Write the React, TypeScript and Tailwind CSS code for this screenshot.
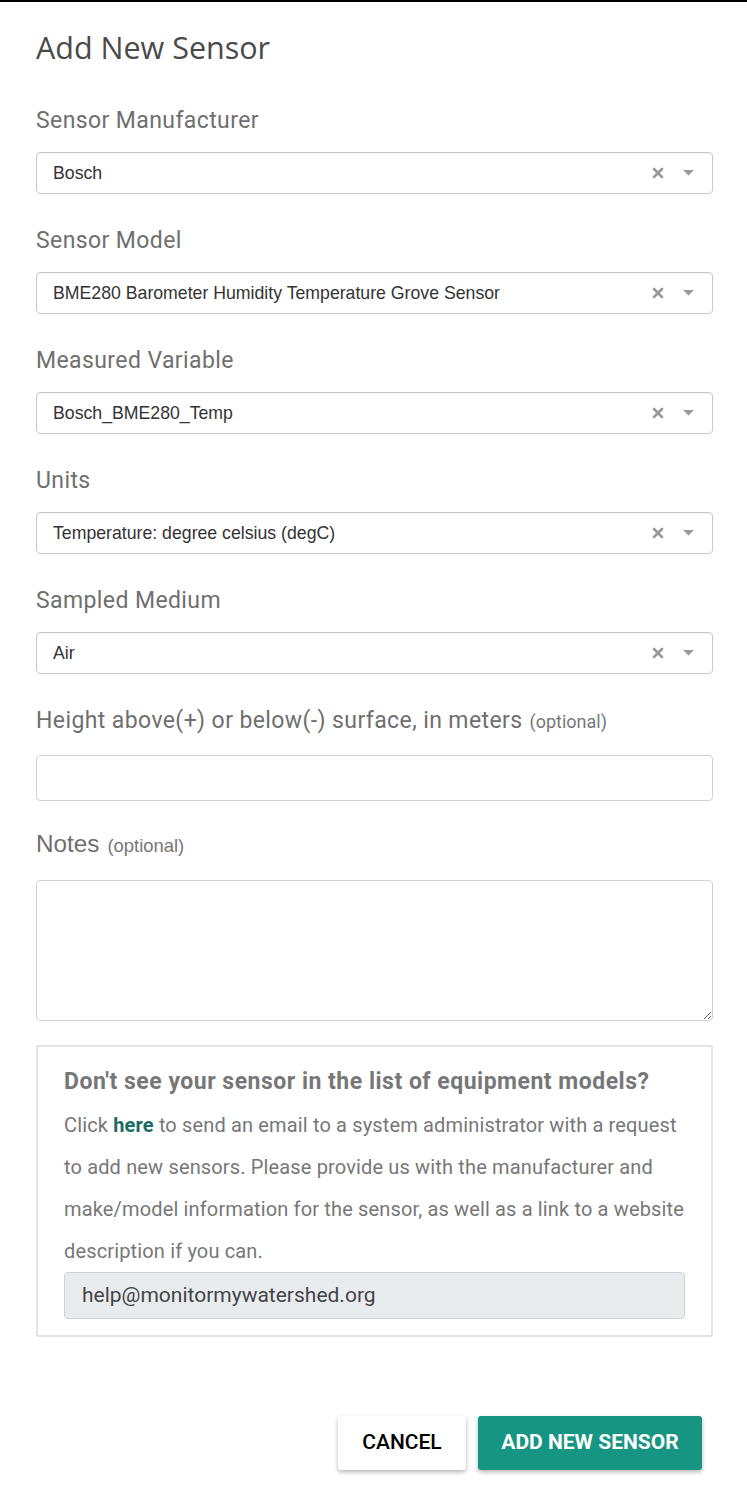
import React from "react";

const labelCls = "text-[23px] leading-none tracking-[0.4px] text-[#6f6f6f]";

function SelectBox({ value }: { value: string }) {
  return (
    <div className="h-[42px] w-full rounded-[4px] border border-[#c8c8c8] bg-white flex items-center pl-4 pr-[18px] shadow-[inset_0_1px_1px_rgba(0,0,0,0.04)]">
      <span className="flex-1 text-[17.7px] text-[#333] truncate" style={{ fontFamily: '"Liberation Sans", Arial, sans-serif' }}>
        {value}
      </span>
      <svg width="12" height="12" viewBox="0 0 12 12" className="mr-[19px]">
        <path d="M2 2 L10 10 M10 2 L2 10" stroke="#999" strokeWidth="2.6" strokeLinecap="round" />
      </svg>
      <svg width="11" height="6" viewBox="0 0 11 6">
        <path d="M0 0 L11 0 L5.5 5.5 Z" fill="#999" />
      </svg>
    </div>
  );
}

function Field({ label, value }: { label: string; value: string }) {
  return (
    <div className="flex flex-col">
      <div className={`${labelCls} h-[30px] flex items-center`}>{label}</div>
      <div className="mt-[17px]">
        <SelectBox value={value} />
      </div>
    </div>
  );
}

const sansLib = { fontFamily: '"Liberation Sans", Arial, sans-serif' };

export default function App() {
  return (
    <div
      className="w-[747px] h-[1503px] bg-white border-t-2 border-black"
      style={{ fontFamily: 'Roboto, "Liberation Sans", sans-serif' }}
    >
      <div className="pl-9 pr-[34px]">
        <h1
          className="pt-[28px] text-[30.5px] leading-[34px] text-[#4a4a4a]"
          style={{ fontFamily: '"Open Sans", "Noto Sans", sans-serif' }}
        >
          Add New Sensor
        </h1>
        <div className="mt-[41px] flex flex-col gap-[31px]">
          <Field label="Sensor Manufacturer" value="Bosch" />
          <Field label="Sensor Model" value="BME280 Barometer Humidity Temperature Grove Sensor" />
          <Field label="Measured Variable" value="Bosch_BME280_Temp" />
          <Field label="Units" value="Temperature: degree celsius (degC)" />
          <Field label="Sampled Medium" value="Air" />
        </div>

        <div className="mt-[31px] h-[30px] flex items-center whitespace-nowrap">
          <span className={labelCls}>Height above(+) or below(-) surface, in meters</span>
          <span className="ml-[7px] text-[18px] text-[#777] mt-[3px]">(optional)</span>
        </div>
        <input className="mt-[20px] block w-full h-[46px] rounded-[4px] border border-[#cfd2d6] bg-white" />

        <div className="mt-[28px] h-[30px] flex items-center">
          <span className="text-[24.3px] text-[#6f6f6f]" style={sansLib}>
            Notes
          </span>
          <span className="ml-[8px] text-[18.4px] text-[#777] mt-[3px]" style={sansLib}>
            (optional)
          </span>
        </div>
        <textarea className="mt-[21px] block w-full h-[141px] rounded-[4px] border border-[#cfd2d6] bg-white resize-y" />

        <div className="mt-[24px] border-2 border-[#e3e3e3] rounded-[2px] px-[26px] pt-[18px] pb-[16px]">
          <div className="text-[23px] tracking-[0.5px] font-bold text-[#777] leading-[34px] whitespace-nowrap">
            Don't see your sensor in the list of equipment models?
          </div>
          <p className="text-[20px] tracking-[0.15px] leading-[42px] text-[#777] mt-[5px] whitespace-nowrap">
            Click <span className="font-bold text-[#1e6b63]">here</span> to send an email to a system administrator with a request
            <br />
            to add new sensors. Please provide us with the manufacturer and
            <br />
            make/model information for the sensor, as well as a link to a website
            <br />
            description if you can.
          </p>
          <div className="h-[47px] rounded-[4px] border border-[#cfd3d8] bg-[#e9ecef] flex items-center px-[17px] text-[21px] text-[#444]">
            help@monitormywatershed.org
          </div>
        </div>

        <div className="mt-[79px] flex justify-end gap-3 pr-[11px]">
          <button className="h-[54px] w-[128px] rounded-[3px] bg-white text-black text-[21px] font-medium shadow-[0_2px_4px_rgba(0,0,0,0.3)]">
            CANCEL
          </button>
          <button className="h-[54px] w-[224px] rounded-[3px] bg-[#159582] text-white text-[21px] font-bold shadow-[0_2px_4px_rgba(0,0,0,0.3)]">
            ADD NEW SENSOR
          </button>
        </div>
      </div>
    </div>
  );
}
